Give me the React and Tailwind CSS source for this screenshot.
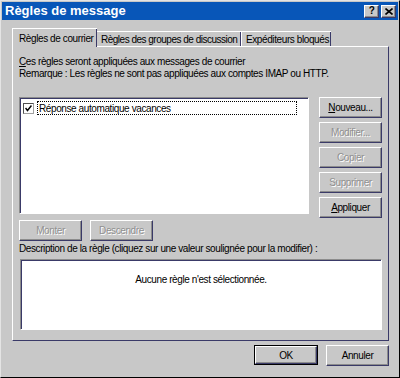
const raised =
  'border border-t-white border-l-white border-r-[#3a3a68] border-b-[#3a3a68] shadow-[inset_-1px_-1px_#8c8c8c]';
const sunken =
  'border border-t-[#8c8c8c] border-l-[#8c8c8c] border-r-white border-b-white shadow-[inset_1px_1px_#3a3a68]';
const disabledText = 'text-[#909090] [text-shadow:1px_1px_0_#fff]';

function Btn({ children, disabled, className = '' }) {
  return (
    <button
      type="button"
      className={`flex h-[21px] w-[63px] items-center justify-center bg-[#c8c8c8] leading-none ${raised} ${
        disabled ? disabledText : 'text-black'
      } ${className}`}
    >
      {children}
    </button>
  );
}

function Hot({ children }) {
  return <span className="underline underline-offset-[1px]">{children}</span>;
}

export default function App() {
  return (
    <div
      className="flex h-[378px] w-[400px] flex-col overflow-hidden border border-t-[#e4e4e4] border-l-[#e4e4e4] border-r-black border-b-black bg-[#c8c8c8] text-[10px] tracking-[-0.4px] text-black"
      style={{ fontFamily: '"Liberation Sans", Arial, sans-serif' }}
    >
      {/* title bar */}
      <div className="mx-[1px] mt-[1px] flex h-[18px] items-center bg-[#0856b8] pl-[3px] pr-[2px]">
        <span className="text-[13px] font-bold tracking-normal text-white">Règles de message</span>
        <div className="ml-auto flex gap-[2px]">
          <div className={`flex h-[13px] w-[15px] items-center justify-center bg-[#c8c8c8] text-[10px] font-bold leading-none ${raised}`}>?</div>
          <div className={`flex h-[13px] w-[15px] items-center justify-center bg-[#c8c8c8] ${raised}`}>
            <svg width="8" height="7" viewBox="0 0 8 7">
              <path d="M0.5 0.5 L7.5 6.5 M7.5 0.5 L0.5 6.5" stroke="#000" strokeWidth="1.6" />
            </svg>
          </div>
        </div>
      </div>

      {/* tabs */}
      <div className="ml-[11px] mt-[7px] flex h-[19px] items-end">
        <div className="relative z-10 -mb-px flex h-[19px] w-[85px] items-center border-l border-t border-white bg-[#c8c8c8] pl-[6px] shadow-[inset_-1px_0_#3a3a68]">
          Règles de courrier
        </div>
        <div className="flex h-[15px] w-[144px] items-center border-t border-white pl-[4px] tracking-[-0.5px] shadow-[inset_-1px_0_#3a3a68]">
          Règles des groupes de discussion
        </div>
        <div className="flex h-[15px] w-[90px] items-center border-t border-l border-white pl-[4px] shadow-[inset_-1px_0_#3a3a68]">
          Expéditeurs bloqués
        </div>
      </div>

      {/* panel */}
      <div className="ml-[11px] flex h-[295px] w-[377px] flex-col border border-t-white border-l-white border-r-[#3a3a68] border-b-[#3a3a68] pl-[6px]">
        <p className="mt-[9px] leading-[12px]">
          <Hot>C</Hot>es règles seront appliquées aux messages de courrier
        </p>
        <p className="leading-[12px]">Remarque : Les règles ne sont pas appliquées aux comptes IMAP ou HTTP.</p>

        <div className="mt-[17px] flex">
          <div className={`h-[117px] w-[290px] bg-white p-[2px] ${sunken}`}>
            <div className="flex items-center pl-[1px] pt-[1px]">
              <div className="flex h-[11px] w-[11px] items-center justify-center border border-t-[#505050] border-l-[#505050] border-r-[#a0a0a0] border-b-[#a0a0a0] bg-white">
                <svg width="7" height="7" viewBox="0 0 7 7">
                  <path d="M0.5 3 L2.5 5.5 L6.5 0.5" stroke="#000" strokeWidth="1.5" fill="none" />
                </svg>
              </div>
              <div className="ml-[3px] flex h-[14px] w-[260px] items-center border border-dotted border-black pl-[1px]">
                Réponse automatique vacances
              </div>
            </div>
          </div>
          <div className="ml-[10px] flex flex-col gap-[4px]">
            <Btn><span><Hot>N</Hot>ouveau...</span></Btn>
            <Btn disabled>Modifier...</Btn>
            <Btn disabled>Copier</Btn>
            <Btn disabled>Supprimer</Btn>
            <Btn><span><Hot>A</Hot>ppliquer</span></Btn>
          </div>
        </div>

        <div className="mt-[2px] flex gap-[8px]">
          <Btn disabled className="h-[20px]">Monter</Btn>
          <Btn disabled className="h-[20px]">Descendre</Btn>
        </div>

        <p className="mt-[1px] leading-[14px]">Description de la règle (cliquez sur une valeur soulignée pour la modifier) :</p>

        <div className={`ml-[1px] mt-[3px] flex h-[71px] w-[362px] justify-center bg-white pt-[12px] ${sunken}`}>
          Aucune règle n'est sélectionnée.
        </div>
      </div>

      {/* dialog buttons */}
      <div className="mt-[4px] flex justify-end gap-[8px] pr-[10px]">
        <button type="button" className="h-[20px] w-[64px] border border-black bg-[#c8c8c8]">
          <div className={`flex h-full w-full items-center justify-center ${raised}`}>OK</div>
        </button>
        <Btn className="h-[20px]">Annuler</Btn>
      </div>
    </div>
  );
}
